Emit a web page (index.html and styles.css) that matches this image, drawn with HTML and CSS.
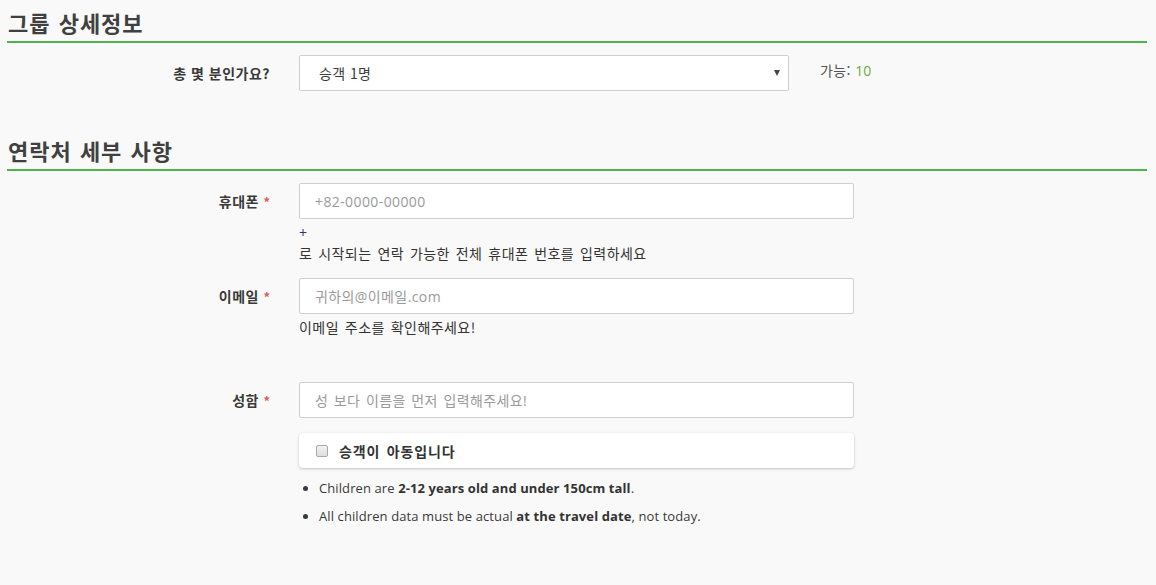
FILE: index.html
```html
<!DOCTYPE html>
<html lang="ko">
<head>
<meta charset="utf-8">
<title>그룹 상세정보</title>
<link rel="stylesheet" href="styles.css">
</head>
<body>
<div class="page">
  <section class="section">
    <h2 class="section-title">그룹 상세정보</h2>
    <div class="form-row">
      <label class="form-label">총 몇 분인가요?</label>
      <div class="field field-inline">
        <div class="select-wrap">
          <select class="select">
            <option>승객 1명</option>
          </select>
          <span class="caret"></span>
        </div>
        <span class="avail">가능: <span class="avail-num">10</span></span>
      </div>
    </div>
  </section>

  <section class="section section-contact">
    <h2 class="section-title">연락처 세부 사항</h2>

    <div class="form-row">
      <label class="form-label">휴대폰 <span class="req">*</span></label>
      <div class="field">
        <input class="input" type="text" placeholder="+82-0000-00000">
        <div class="help"><span class="plus">+</span><br>로 시작되는 연락 가능한 전체 휴대폰 번호를 입력하세요</div>
      </div>
    </div>

    <div class="form-row row-email">
      <label class="form-label">이메일 <span class="req">*</span></label>
      <div class="field">
        <input class="input" type="text" placeholder="귀하의@이메일.com">
        <div class="help">이메일 주소를 확인해주세요!</div>
      </div>
    </div>

    <div class="form-row row-name">
      <label class="form-label">성함 <span class="req">*</span></label>
      <div class="field">
        <input class="input" type="text" placeholder="성 보다 이름을 먼저 입력해주세요!">
        <label class="check-card">
          <span class="checkbox"></span>
          <span class="check-label">승객이 아동입니다</span>
        </label>
        <ul class="notes">
          <li>Children are <b>2-12 years old and under 150cm tall</b>.</li>
          <li>All children data must be actual <b>at the travel date</b>, not today.</li>
        </ul>
      </div>
    </div>
  </section>
</div>
</body>
</html>
```

FILE: styles.css
```css
* { box-sizing: border-box; }

html, body {
  margin: 0;
  padding: 0;
  background: #f9f9f9;
}

body {
  font-family: "Noto Sans CJK KR", "Open Sans", sans-serif;
  color: #3a3a3a;
  font-size: 14px;
}

.page {
  width: 1147px;
  padding-left: 7px;
}

.section-title {
  margin: 0;
  padding: 8px 0 5px 1px;
  font-size: 22px;
  line-height: 28px;
  font-weight: 700;
  letter-spacing: 1px;
  word-spacing: 1px;
  color: #404040;
  border-bottom: 2px solid #4cb649;
}

.section-contact {
  margin-top: 37px;
}

.form-row {
  display: flex;
  align-items: flex-start;
  margin-top: 12px;
}

.row-email {
  margin-top: 15px;
}

.row-name {
  margin-top: 45px;
}

.form-label {
  width: 263px;
  flex: none;
  text-align: right;
  font-size: 14px;
  font-weight: 700;
  line-height: 36px;
  letter-spacing: 0.5px;
  color: #3a3a3a;
}

.req {
  color: #e05a5a;
  font-size: 13px;
  letter-spacing: 0;
}

.field {
  margin-left: 29px;
  width: 555px;
}

.field-inline {
  display: flex;
  align-items: flex-start;
  width: auto;
}

.select-wrap {
  position: relative;
  width: 490px;
  height: 36px;
}

.select {
  appearance: none;
  -webkit-appearance: none;
  width: 100%;
  height: 36px;
  padding: 0 0 0 19px;
  border: 1px solid #cfcfcf;
  border-radius: 2px;
  background: #fff;
  font-family: "Noto Sans CJK KR", "Open Sans", sans-serif;
  font-size: 14px;
  letter-spacing: 0.4px;
  color: #3a3a3a;
}

.caret {
  position: absolute;
  right: 9px;
  top: 15px;
  width: 0;
  height: 0;
  border-left: 3px solid transparent;
  border-right: 3px solid transparent;
  border-top: 6px solid #444;
}

.avail {
  margin-left: 31px;
  line-height: 30px;
  font-size: 14px;
  letter-spacing: 0.4px;
  color: #555;
}

.avail-num {
  color: #6aac3e;
  font-family: "Open Sans", sans-serif;
  letter-spacing: 0;
}

.input {
  display: block;
  width: 555px;
  height: 36px;
  padding: 0 15px;
  border: 1px solid #cfcfcf;
  border-radius: 2px;
  background: #fff;
  font-family: "Open Sans", "Noto Sans CJK KR", sans-serif;
  font-size: 14px;
  color: #333;
}

.input::placeholder {
  color: #9a9a9a;
  letter-spacing: 0.4px;
  word-spacing: 1.5px;
}

.help {
  margin-top: 3px;
  line-height: 20px;
  font-size: 14px;
  letter-spacing: 0.45px;
  word-spacing: 1.5px;
  color: #333;
}

.plus {
  color: #1f3f77;
  font-family: "Open Sans", sans-serif;
}

.check-card {
  display: flex;
  align-items: center;
  margin-top: 15px;
  height: 35px;
  padding-left: 17px;
  background: #fff;
  border-radius: 4px;
  box-shadow: 0 1px 3px rgba(0, 0, 0, 0.22);
}

.checkbox {
  width: 12px;
  height: 12px;
  border: 1px solid #a9a9a9;
  border-radius: 2px;
  background: linear-gradient(#f2f2f2, #dedede);
}

.check-label {
  margin-left: 11px;
  font-weight: 700;
  font-size: 14px;
  letter-spacing: 0.9px;
  word-spacing: 1.5px;
  color: #333;
}

.notes {
  margin: 6px 0 0;
  padding-left: 20px;
  font-family: "Open Sans", sans-serif;
  font-size: 13px;
  line-height: 28px;
  letter-spacing: 0.1px;
  color: #3a3a3a;
}

.notes b {
  color: #333;
}
```
